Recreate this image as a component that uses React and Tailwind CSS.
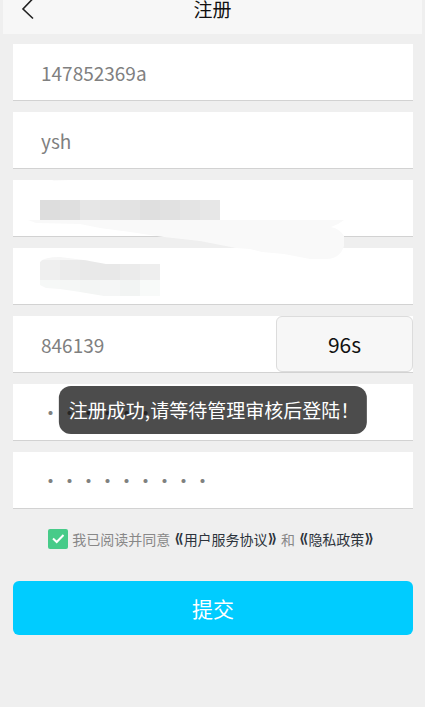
import React, { useState } from 'react';

const rowClass = 'h-[57px] w-full border-b border-[#d2d2d2] bg-white';
const inputClass = 'h-full w-full min-w-0 bg-transparent pl-7 pr-3 text-[19px] text-[#808080] outline-none';

/**
 * Single form row
 */
const Field = ({ id, label, type = 'text', value, onChange, children }) => (
  <div className={`relative flex ${rowClass}`}>
    <input
      id={id}
      name={id}
      type={type}
      aria-label={label}
      value={value}
      onChange={(e) => onChange(id, e.target.value)}
      className={inputClass}
    />
    {children}
  </div>
);

const nameBlocks = ['#dddddd', '#dfdfdf', '#e6e6e6', '#e4e4e4', '#e3e3e3', '#dfdfdf', '#e1e1e1', '#e4e4e4', '#e7e7e7'];
const phoneBlocks = ['#efefef', '#ebebeb', '#e9e9e9', '#e8e8e8', '#ebebeb', '#eeeeee'];
const phoneLowBlocks = ['#f6f8f7', '#f5f7f6', '#f3f5f4', '#f5f6f6', '#f2f4f3', '#f8faf9'];

// Mosaic that hides the personal data in two fields
const Mosaic = () => (
  <svg
    className="pointer-events-none absolute left-0 top-0"
    width="340"
    height="125"
    viewBox="13 180 340 125"
    aria-hidden="true"
  >
    <path
      d="M28 220 H344 Q338 225 331 227 Q340 229 344 236 V246 Q340 259 326 259 H310 L284 254 L262 252 L250 249 L236 248 L200 241 L164 237 L150 235 L130 232 L100 228 L80 224 L36 223 Z"
      fill="#f9f9f9"
    />
    <path d="M52 181 Q58 177 70 180 Z" fill="#fafafa" />
    {nameBlocks.map((fill, i) => (
      <rect key={i} x={40 + i * 20} y="200" width="20" height="20" fill={fill} />
    ))}
    <clipPath id="phone-smudge">
      <path d="M40 262 Q44 257 60 257 L84 260 L106 264 H160 V296 H104 L80 292 L60 289 L46 288 L40 285 Z" />
    </clipPath>
    <g clipPath="url(#phone-smudge)">
      <rect x="40" y="256" width="50" height="5" fill="#f6f6f6" />
      {phoneBlocks.map((fill, i) => (
        <rect key={i} x={40 + i * 20} y="260" width="20" height="20" fill={fill} />
      ))}
      {phoneLowBlocks.map((fill, i) => (
        <rect key={i} x={40 + i * 20} y="280" width="20" height="16" fill={fill} />
      ))}
    </g>
  </svg>
);

// Agreement link wrapped in bold half-width title marks
const DocLink = ({ href, children }) => (
  <a href={href} className="flex items-center text-[#2c333b]">
    <b className="font-['DejaVu_Sans',sans-serif] text-[13px]">⟪</b>
    {children}
    <b className="font-['DejaVu_Sans',sans-serif] text-[13px]">⟫</b>
  </a>
);

const App = () => {
  const [form, setForm] = useState({
    account: '147852369a',
    nickname: 'ysh',
    realName: '',
    phone: '',
    code: '846139',
    password: '123456',
    confirm: '123456789',
  });
  const [agreed, setAgreed] = useState(true);

  const update = (id, value) => setForm((prev) => ({ ...prev, [id]: value }));

  return (
    <div className="min-h-screen bg-[#efefef] font-['Noto_Sans_CJK_SC',sans-serif]">
      <header className="relative mx-[3px] flex h-[34px] items-start justify-center bg-[#f7f7f7]">
        <button type="button" aria-label="返回" className="absolute left-4 top-0">
          <svg width="18" height="20" viewBox="0 0 18 20" fill="none" stroke="#222" strokeWidth="1.6">
            <path d="M14 -1.5 L4 9 L14 18.5" />
          </svg>
        </button>
        <h1 className="text-[19px] leading-[18px] text-[#111]">注册</h1>
      </header>

      <form className="pl-[13px] pr-3 pt-2.5" onSubmit={(e) => e.preventDefault()}>
        <div className="flex flex-col gap-[11px]">
          <Field id="account" label="账号" value={form.account} onChange={update} />
          <Field id="nickname" label="昵称" value={form.nickname} onChange={update} />

          <div className="relative flex flex-col gap-[11px]">
            <Field id="realName" label="姓名" value={form.realName} onChange={update} />
            <Field id="phone" label="手机号" value={form.phone} onChange={update} />
            <Mosaic />
          </div>

          <Field id="code" label="验证码" value={form.code} onChange={update}>
            <button
              type="button"
              className="h-full w-[137px] shrink-0 rounded-md border border-[#dcdcdc] bg-[#f7f7f7] pt-0.5 text-[21px] text-[#111]"
            >
              96s
            </button>
          </Field>

          <Field id="password" label="密码" type="password" value={form.password} onChange={update}>
            {/* Toast */}
            <div
              role="status"
              className="absolute left-1/2 top-0.5 flex h-12 -translate-x-1/2 items-center whitespace-nowrap rounded-xl bg-black/70 pl-2.5 pr-2 text-[19px] text-white"
            >
              注册成功,请等待管理审核后登陆！
            </div>
          </Field>

          <Field id="confirm" label="确认密码" type="password" value={form.confirm} onChange={update} />
        </div>

        <div className="mt-5 flex items-center justify-center gap-1 whitespace-nowrap pr-1 text-[14px] leading-5 text-[#888]">
          <span className="relative h-5 w-5">
            <input
              id="agree"
              type="checkbox"
              checked={agreed}
              onChange={(e) => setAgreed(e.target.checked)}
              className="block h-5 w-5 appearance-none rounded-xs bg-white checked:bg-[#47cb89]"
            />
            {agreed && (
              <svg
                className="pointer-events-none absolute inset-0"
                width="20"
                height="20"
                viewBox="0 0 20 20"
                fill="none"
                stroke="#fff"
                strokeWidth="2"
              >
                <path d="M5 9.5 L8.7 13 L15.5 6" />
              </svg>
            )}
          </span>
          <label htmlFor="agree">我已阅读并同意</label>
          <DocLink href="#service">用户服务协议</DocLink>
          <span>和</span>
          <DocLink href="#privacy">隐私政策</DocLink>
        </div>

        <button type="submit" className="mt-8 h-[54px] w-full rounded-md bg-[#00ccff] pt-0.5 text-[21px] text-white">
          提交
        </button>
      </form>
    </div>
  );
};

export default App;
